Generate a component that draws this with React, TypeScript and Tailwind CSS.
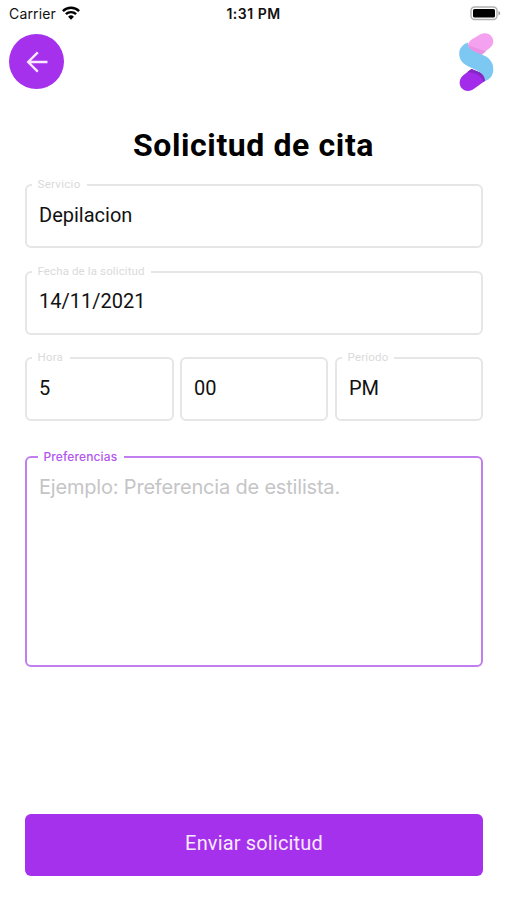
import type { ReactNode } from "react";

type FieldProps = {
  label?: string;
  labelClass?: string;
  className?: string;
  children: ReactNode;
};

function Field({ label, labelClass = "", className = "", children }: FieldProps) {
  return (
    <div className={`relative flex h-16 items-center rounded-md border-2 border-[#e6e6e6] pl-3 ${className}`}>
      {label && (
        <span
          className={`absolute -top-[10px] left-[5px] bg-white pl-[5.5px] text-[11.5px] leading-4 whitespace-nowrap text-[#dadada] ${labelClass}`}
        >
          {label}
        </span>
      )}
      <span className="relative -top-px text-[20px] leading-6 whitespace-nowrap text-[#111]">{children}</span>
    </div>
  );
}

function StatusBar() {
  return (
    <div className="flex h-7 items-center justify-between pr-[6px] pl-[9px] font-['Inter',sans-serif] text-[14px] text-[#111]">
      <div className="flex w-[120px] items-center gap-[5px]">
        <span className="mb-0.5 w-[48px] tracking-[0.15px] whitespace-nowrap">Carrier</span>
        <svg width="18" height="14" viewBox="0 0 18 14" className="mb-0.5" fill="none" stroke="#000" strokeWidth="2.4">
          <path d="M.9 5.1a11.5 11.5 0 0 1 16.2 0" />
          <path d="M3.9 8.2a7.2 7.2 0 0 1 10.2 0" />
          <path d="M9 13.7 6.1 10.8a4.1 4.1 0 0 1 5.8 0Z" fill="#000" stroke="none" />
        </svg>
      </div>
      <span className="mb-0.5 text-[14px] font-semibold tracking-[0.5px] whitespace-nowrap">1:31 PM</span>
      <div className="flex w-[123px] justify-end">
        <svg width="31" height="16" viewBox="0 0 31 16">
          <rect x="1" y="1" width="26" height="12.5" rx="3.5" fill="#fff" stroke="#b0b0b0" strokeWidth="1.4" />
          <rect x="3" y="3" width="22" height="8.5" rx="1.5" fill="#000" />
          <path d="M28.5 5c2.2.8 2.2 3.600 0 4.400Z" fill="#999" />
        </svg>
      </div>
    </div>
  );
}

function Logo() {
  return (
    <svg width="37" height="59" viewBox="0 0 37 59">
      <path d="M10 11.500C10.500 9.500 12 7.500 14 6.200L22 1.500C28.500-2 35.300 2.200 35.300 8.300C35.300 11 34.300 13 32 14.700L23 22 12 17Z" fill="#f4a1ef" />
      <path d="M9.500 11C13 14.500 18 14.200 22 16.500L28 18.300 23.500 22 12 18Z" fill="#e991e2" />
      <path d="M5.600 42 13.500 36 26 41 27.500 47.500 15.300 56.300C11.500 58.800 6.500 58.500 3.500 55C.3 51 1.500 44.800 5.600 42Z" fill="#a32bea" />
      <path d="M9 39.300 13.500 36 26 41 27.500 47.500 25.500 49C25 44.500 17.500 38.500 9 39.300Z" fill="#8428c4" />
      <path d="M10 9.500C9 14 13 17.200 18 19.300L25.500 22.300C31.500 25 35.300 29.300 35.300 36.300C35.300 42.300 32.500 46 27 48.300C27.300 42.500 22.500 39 15.500 35.800L10.500 33.500C4.500 30.500 1.200 26.500 1.200 20.500C1.200 15.500 4.500 11.500 10 9.500Z" fill="#7dc8f3" />
    </svg>
  );
}

export default function App() {
  return (
    <main className="flex h-[900px] w-[507px] flex-col bg-white font-['Roboto',sans-serif]">
      <StatusBar />
      <header className="flex h-[66px] items-start justify-between pt-[5px] pr-[12px] pl-[9px]">
        <button aria-label="Volver" className="mt-px flex size-[55px] items-center justify-center rounded-full bg-[#a531ed]">
          <svg width="22" height="22" viewBox="0 0 22 22" fill="none" stroke="#f9e8ff" strokeWidth="2.4">
            <path d="M21.500 11H2.500M11.800 1.300 2.200 11l9.600 9.700" />
          </svg>
        </button>
        <Logo />
      </header>
      <h1 className="mt-[31px] h-10 text-center text-[32px] leading-10 font-bold tracking-[0.6px] text-black">
        Solicitud de cita
      </h1>

      <form className="flex flex-1 flex-col pt-[19px] pr-[24px] pl-[25px]" onSubmit={(e) => e.preventDefault()}>
        <Field label="Servicio" labelClass="w-[55px] tracking-[0.3px]">
          Depilacion
        </Field>
        <Field label="Fecha de la solicitud" labelClass="w-[119px] tracking-[0.12px]" className="mt-[23px]">
          <span className="relative -top-px">14/11/2021</span>
        </Field>
        <div className="mt-[22px] grid grid-cols-[149px_148px_149px] gap-x-[6px]">
          <Field label="Hora" labelClass="w-[38px] tracking-[0.2px]">
            5
          </Field>
          <Field>00</Field>
          <Field label="Período" labelClass="w-[52px] tracking-[0.2px]" className="ml-px">
            PM
          </Field>
        </div>
        <div className="relative mt-[35px] h-[211px] rounded-md border-2 border-[#c07fec] pt-[17px] pl-3 font-['Inter',sans-serif]">
          <span className="absolute -top-[9px] left-[11px] w-[86px] bg-white pl-[5.5px] text-[12px] leading-4 font-medium tracking-[0.12px] text-[#b256ee]">
            Preferencias
          </span>
          <span className="block text-[20px] leading-6 tracking-[-0.19px] whitespace-nowrap text-[#c5c5c7]">
            Ejemplo: Preferencia de estilista.
          </span>
        </div>
        <button className="mt-[147px] h-[62px] rounded-md bg-[#a531ed] pb-1 text-[20px] tracking-[0.16px] text-[#faeaff]">
          Enviar solicitud
        </button>
      </form>
    </main>
  );
}
